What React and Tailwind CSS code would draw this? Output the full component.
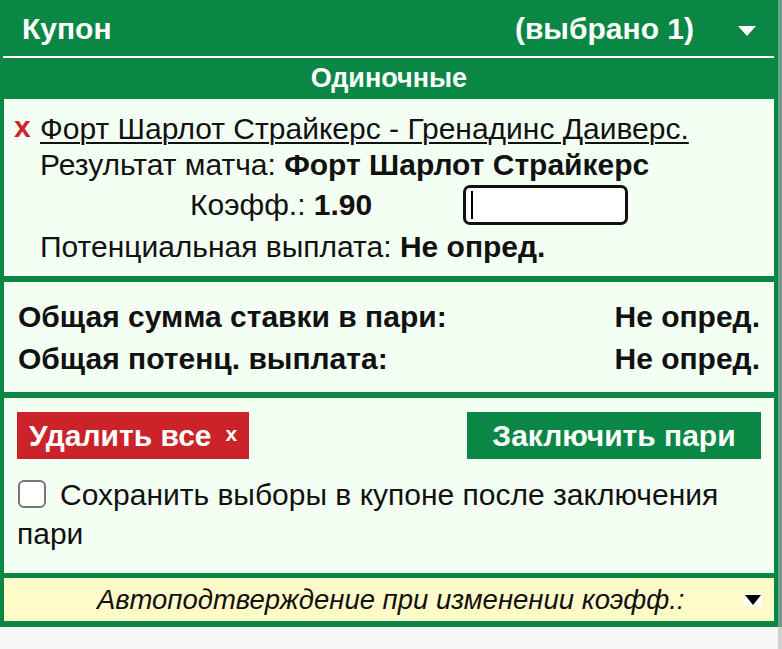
import React from "react";

export default function App() {
  return (
    <div className="w-[782px] h-[649px] bg-[#f6f6f6] flex" style={{ fontFamily: '"Liberation Sans", Arial, sans-serif' }}>
      <div className="w-[778px] flex flex-col bg-[#0a8745] px-[4px] pb-[6px] self-start">
        {/* Header */}
        <div className="h-[56px] flex items-center text-white font-bold text-[30px] pl-[18px] pr-[18px]">
          <span>Купон</span>
          <span className="ml-auto">(выбрано 1)</span>
          <svg width="18" height="10" viewBox="0 0 18 10" className="ml-[44px] mt-[6px]"><path d="M0 0H18L9 10Z" fill="#fff" /></svg>
        </div>
        <div className="h-[2px] bg-white ml-[-1px]" />
        <div className="h-[41px] flex items-center justify-center text-white font-bold text-[27px]">
          Одиночные
        </div>
        {/* Selection */}
        <div className="bg-[#f4fff4] h-[177px] text-[30px] text-[#111] leading-[36px] pt-[12px]">
          <div className="flex items-center">
            <span className="text-[#d0232a] font-bold ml-[10px] w-[26px] leading-[30px] mb-[4px]">x</span>
            <span className="underline underline-offset-[3px] decoration-[2px]">Форт Шарлот Страйкерс - Гренадинс Даиверс.</span>
          </div>
          <div className="ml-[36px]">
            Результат матча: <b>Форт Шарлот Страйкерс</b>
          </div>
          <div className="flex items-center mt-[2px]">
            <span className="ml-[186px]">Коэфф.: <b>1.90</b></span>
            <div className="ml-[91px] w-[165px] h-[40px] border-[3px] border-[#111] rounded-[7px] bg-white flex items-center pl-[5px]">
              <div className="w-[2px] h-[28px] bg-black" />
            </div>
          </div>
          <div className="ml-[36px] mt-[4px]">
            Потенциальная выплата: <b>Не опред.</b>
          </div>
        </div>
        <div className="h-[6px]" />
        {/* Summary */}
        <div className="bg-[#f4fff4] h-[110px] px-[14px] pt-[17px] text-[30px] font-bold text-[#111] leading-[36px]">
          <div className="flex justify-between">
            <span>Общая сумма ставки в пари:</span>
            <span>Не опред.</span>
          </div>
          <div className="flex justify-between mt-[6px]">
            <span>Общая потенц. выплата:</span>
            <span>Не опред.</span>
          </div>
        </div>
        <div className="h-[6px]" />
        {/* Buttons */}
        <div className="bg-[#f4fff4] h-[175px] px-[13px] pt-[14px]">
          <div className="flex justify-between">
            <button className="h-[47px] w-[232px] bg-[#cc2229] text-white font-bold text-[30px] flex items-center pl-[12px]">
              Удалить все <span className="text-[21px] ml-[14px] mb-[4px]">x</span>
            </button>
            <button className="h-[47px] w-[294px] bg-[#0a8745] text-white font-bold text-[30px] flex items-center justify-center">
              Заключить пари
            </button>
          </div>
          <div className="mt-[16px] text-[30px] text-[#111] leading-[39px]">
            <span className="inline-block align-middle w-[28px] h-[28px] border-2 border-[#767676] rounded-[6px] bg-white mr-[14px] ml-[1px] mb-[6px]" />
            Сохранить выборы в купоне после заключения пари
          </div>
        </div>
        <div className="h-[5px]" />
        {/* Auto confirm */}
        <div className="bg-[#fffbc9] h-[43px] flex items-center text-[27.5px] italic text-[#111]">
          <span className="ml-[93px]">Автоподтверждение при изменении коэфф.:</span>
          <span className="ml-auto mr-[12px] w-[18px] h-[12px] bg-white flex items-center justify-center">
            <svg width="16" height="10" viewBox="0 0 16 10"><path d="M0 0H16L8 10Z" fill="#000" /></svg>
          </span>
        </div>
      </div>
      <div className="w-[4px] flex flex-col">
        <div className="h-[627px] bg-[#6a9f8d]" />
        <div className="flex-1 bg-[#cfcfcf]" />
      </div>
    </div>
  );
}
